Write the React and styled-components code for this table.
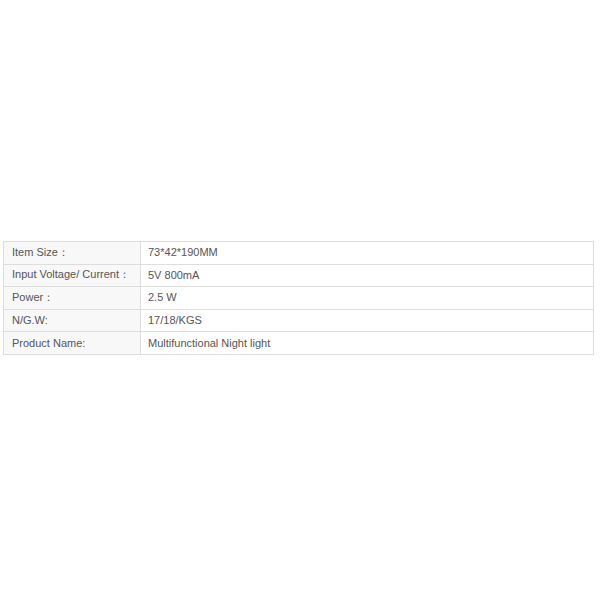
import React from 'react';
import styled, { createGlobalStyle } from 'styled-components';

const specs = [
    ['Item Size：', '73*42*190MM'],
    ['Input Voltage/ Current：', '5V 800mA'],
    ['Power：', '2.5 W'],
    ['N/G.W:', '17/18/KGS'],
    ['Product Name:', 'Multifunctional Night light'],
];

const App = () => {
    return (
        <>
            <GlobalStyle />
            <Page>
                <SpecTable>
                    <tbody>
                        {specs.map(([label, value], index) => (
                            <Row key={index}>
                                <LabelCell>{label}</LabelCell>
                                <ValueCell>{value}</ValueCell>
                            </Row>
                        ))}
                    </tbody>
                </SpecTable>
            </Page>
        </>
    );
};

// START: Styled Components
const GlobalStyle = createGlobalStyle({
    body: {
        margin: 0,
        background: '#ffffff',
        fontFamily: '"Liberation Sans", Arial, sans-serif',
    },
});

const Page = styled.div({
    width: '600px',
    height: '600px',
    boxSizing: 'border-box',
    padding: '241px 6px 0 3px',
});

const SpecTable = styled.table({
    width: '100%',
    borderCollapse: 'collapse',
    fontSize: '11px',
    color: '#555555',
});

const Row = styled.tr({
    height: '22.6px',
});

const LabelCell = styled.td({
    width: '120px',
    padding: '0 8px 1px',
    border: '1px solid #dddddd',
    background: '#f8f8f8',
    verticalAlign: 'middle',
    whiteSpace: 'nowrap',
});

const ValueCell = styled.td({
    padding: '0 7px 1px',
    border: '1px solid #dddddd',
    verticalAlign: 'middle',
});
// END: Styled Components

export default App;
